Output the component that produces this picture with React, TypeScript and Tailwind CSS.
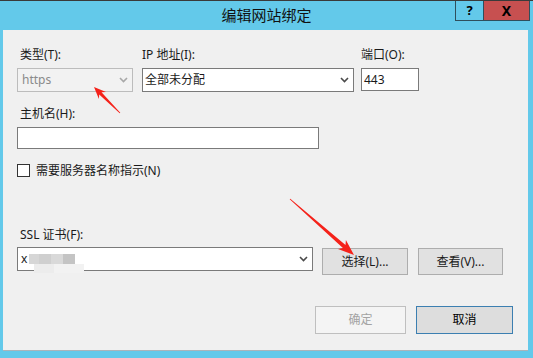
import React from "react";

// tapered annotation arrow, tail -> tip
function arrowPoints(x1: number, y1: number, x2: number, y2: number, L: number, W: number, w0: number, w1: number) {
  const dx = x2 - x1;
  const dy = y2 - y1;
  const len = Math.hypot(dx, dy);
  const ux = dx / len;
  const uy = dy / len;
  const nx = -uy;
  const ny = ux;
  const bx = x2 - ux * L;
  const by = y2 - uy * L;
  const bbx = x2 - ux * (L - 3);
  const bby = y2 - uy * (L - 3);
  const pts = [
    [x1 + nx * w0, y1 + ny * w0],
    [bbx + nx * w1, bby + ny * w1],
    [bx + nx * W, by + ny * W],
    [x2, y2],
    [bx - nx * W, by - ny * W],
    [bbx - nx * w1, bby - ny * w1],
    [x1 - nx * w0, y1 - ny * w0],
  ];
  return pts.map((p) => p[0].toFixed(1) + "," + p[1].toFixed(1)).join(" ");
}

function Chevron({ color }: { color: string }) {
  return (
    <svg width="9" height="6" viewBox="0 0 9 6" className="shrink-0">
      <polyline points="1,1 4.5,4.5 8,1" fill="none" stroke={color} strokeWidth="1.6" />
    </svg>
  );
}

export default function App() {
  return (
    <div className="relative flex h-[358px] w-[533px] flex-col overflow-hidden border-t border-[#3a3a3a] bg-[#63c9ea] font-['Noto_Sans','Noto_Sans_CJK_SC',sans-serif] text-[12px] text-[#1a1a1a]">
      {/* Title bar */}
      <div className="grid h-[29px] grid-cols-[1fr_auto_1fr]">
        <div />
        <div className="pt-[4px] text-[15px] leading-[20px] text-[#111]">编辑网站绑定</div>
        <div className="flex items-start justify-end pr-[3px]">
          <div className="flex h-[20px] w-[28px] items-center justify-center border-b border-l border-[#2f4f5c] bg-[#63c9ea] text-[13px] font-bold leading-none text-black">
            ?
          </div>
          <div className="flex h-[20px] w-[47px] items-center justify-center border-b border-l border-r border-[#2f4f5c] bg-[#c75050] text-[14px] font-bold leading-none text-black">
            X
          </div>
        </div>
      </div>

      {/* Content */}
      <div className="ml-[3px] mr-[5px] flex h-[321px] flex-col border-b border-[#aab4ba] bg-[#f0f0f0] pl-[14px] pr-[15px]">
        {/* Row 1 */}
        <div className="mt-[17px] flex items-start">
          <div className="flex w-[116px] flex-col gap-[5px]">
            <div className="pl-[3px] leading-[16px]">类型(T):</div>
            <div className="flex h-[24px] items-center justify-between border border-[#bcbcbc] bg-[#f2f2f2] pl-[4px] pr-[4px] text-[#8a8a8a]">
              <span className="leading-none">https</span>
              <Chevron color="#a8a8a8" />
            </div>
          </div>
          <div className="ml-[9px] flex w-[212px] flex-col gap-[5px]">
            <div className="leading-[16px]">IP 地址(I):</div>
            <div className="flex h-[24px] items-center justify-between border border-[#7a7a7a] bg-white pl-[2px] pr-[4px]">
              <span className="leading-none">全部未分配</span>
              <Chevron color="#4a4a4a" />
            </div>
          </div>
          <div className="ml-[7px] flex w-[58px] flex-col gap-[5px]">
            <div className="leading-[16px]">端口(O):</div>
            <div className="flex h-[23px] items-center border border-[#7a7a7a] bg-white pl-[2px]">
              <span className="leading-none">443</span>
            </div>
          </div>
        </div>

        {/* Host name */}
        <div className="mt-[14px] flex flex-col gap-[5px]">
          <div className="pl-[3px] leading-[16px]">主机名(H):</div>
          <div className="h-[22px] w-[302px] border border-[#7a7a7a] bg-white" />
        </div>

        {/* SNI */}
        <div className="mt-[15px] flex h-[13px] items-center gap-[6px]">
          <div className="h-[13px] w-[13px] border border-[#333] bg-white" />
          <span className="leading-[13px]">需要服务器名称指示(N)</span>
        </div>

        {/* SSL */}
        <div className="mt-[50px] pl-[3px] leading-[16px]">SSL 证书(F):</div>
        <div className="mt-[4px] flex items-start">
          <div className="flex h-[24px] w-[296px] items-center justify-between border border-[#7a7a7a] bg-white pl-[3px] pr-[4px]">
            <div className="flex items-center">
              <span className="leading-none">x</span>
              <div className="ml-[2px] mt-[8px] flex flex-col">
                <div className="flex h-[10px]">
                  <div className="w-[10px] bg-[#d6d6d6]" />
                  <div className="w-[12px] bg-[#cfcfcf]" />
                  <div className="w-[12px] bg-[#d9d9d9]" />
                  <div className="w-[12px] bg-[#c4c4c4]" />
                </div>
                <div className="ml-[5px] flex h-[9px]">
                  <div className="w-[20px] bg-[#ececec]" />
                  <div className="w-[30px] bg-[#f2f2f2]" />
                </div>
              </div>
            </div>
            <Chevron color="#4a4a4a" />
          </div>
          <div className="ml-[9px] mt-[1px] flex h-[27px] w-[86px] items-center justify-center border border-[#adadad] bg-[#e1e1e1]">
            选择(L)...
          </div>
          <div className="ml-[10px] mt-[1px] flex h-[27px] w-[85px] items-center justify-center border border-[#adadad] bg-[#e1e1e1]">
            查看(V)...
          </div>
        </div>

        {/* Footer buttons */}
        <div className="mt-[31px] flex justify-end gap-[10px]">
          <div className="flex h-[28px] w-[91px] items-center justify-center border border-[#bfbfbf] bg-[#f4f4f4] text-[#a3a3a3]">
            确定
          </div>
          <div className="flex h-[28px] w-[97px] items-center justify-center border border-[#3c7fb1] bg-[#dddddd] text-black">
            取消
          </div>
        </div>
      </div>

      {/* Annotation arrows */}
      <svg className="pointer-events-none absolute left-0 top-0" width="533" height="358">
        <polygon points={arrowPoints(120, 112, 94, 86, 12, 5, 0.4, 1.6)} fill="#f5221a" />
        <polygon points={arrowPoints(290, 198, 354, 254, 16, 6, 0.4, 2)} fill="#f5221a" />
      </svg>
    </div>
  );
}
